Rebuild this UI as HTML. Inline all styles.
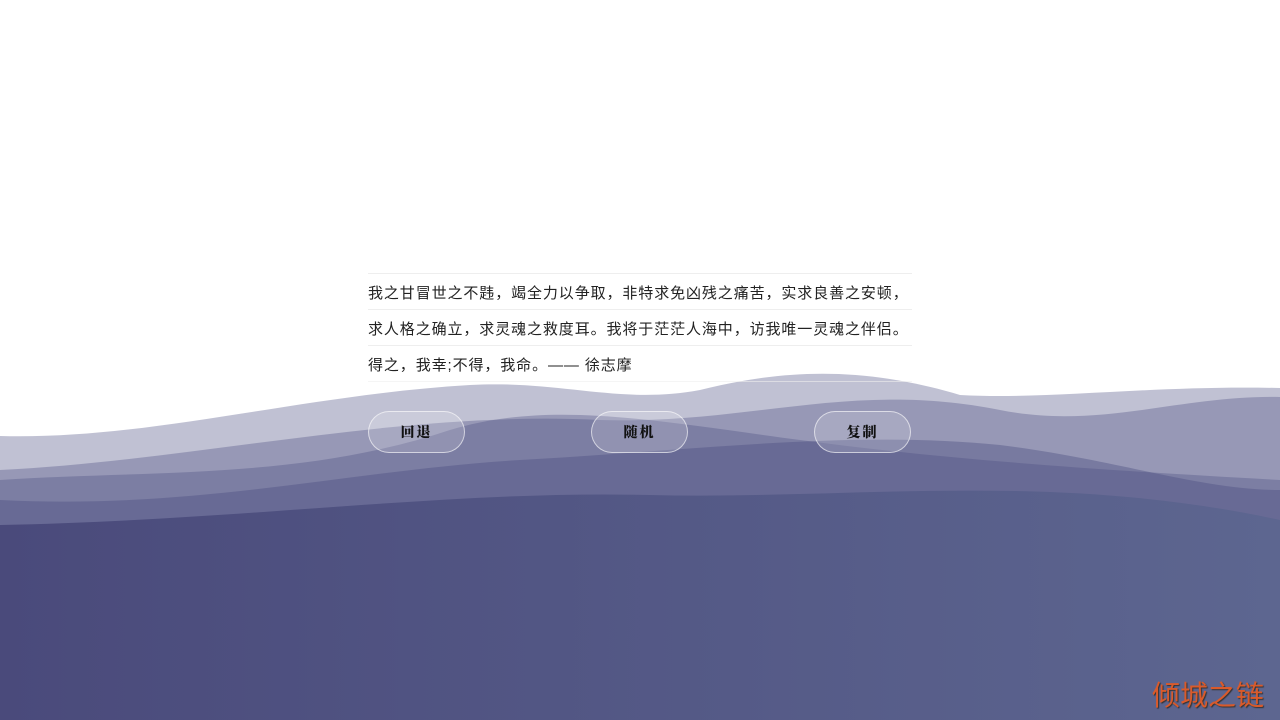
<!DOCTYPE html>
<html><head><meta charset="utf-8"><style>
html,body{margin:0;padding:0;width:1280px;height:720px;overflow:hidden;background:#fff;font-family:"Liberation Sans","Noto Sans CJK SC",sans-serif;}
svg.bg{position:absolute;left:0;top:0}
.txt{position:absolute;left:368px;top:273px;width:544px;}
.ln{height:35px;border-top:1px solid #eee;font-size:15px;letter-spacing:0.9px;line-height:39px;color:#222;white-space:nowrap;}
.ln:last-child{border-bottom:1px solid rgba(238,238,238,.6)}
.btn{position:absolute;top:411px;width:95px;height:40px;border:1px solid rgba(255,255,255,.6);border-radius:21px;background:rgba(255,255,255,.16);color:#111;font-family:"Noto Serif CJK SC",serif;font-weight:900;font-size:14px;letter-spacing:2px;text-align:center;line-height:40px;}
.wm{position:absolute;left:1152px;top:678px;color:#d95a2b;font-size:28px;line-height:36px;text-shadow:1px 1px 1px #333;}
</style></head><body>
<svg class="bg" width="1280" height="720" viewBox="0 0 1280 720">
<defs><linearGradient id="g" x1="0" x2="1"><stop offset="0" stop-color="#4a4a7b"/><stop offset="1" stop-color="#5d6690"/></linearGradient></defs>
<path d="M0 436 C150 440 300 395 470 385 C560 380 620 405 700 390 C780 370 860 365 960 395 C1050 400 1150 385 1280 388 L1280 560 L0 560Z" fill="#4a4e80" opacity=".35"/>
<path d="M0 470 C200 460 400 410 600 420 C750 425 850 380 1000 410 C1100 430 1180 395 1280 397 L1280 560 L0 560Z" fill="#4a4e80" opacity=".35"/>
<path d="M0 480 C150 470 300 480 450 430 C550 400 650 420 800 440 C950 460 1100 470 1280 480 L1280 560 L0 560Z" fill="#4a4e80" opacity=".35"/>
<path d="M0 500 C200 510 350 470 520 460 C700 450 850 430 1000 445 C1120 460 1200 490 1280 490 L1280 560 L0 560Z" fill="#4a4e80" opacity=".4"/>
<path d="M0 525 C250 520 450 490 650 495 C850 500 1050 470 1280 520 L1280 720 L0 720Z" fill="url(#g)"/>
<rect x="0" y="530" width="1280" height="190" fill="url(#g)"/>
</svg>
<div class="txt">
<div class="ln">我之甘冒世之不韪，竭全力以争取，非特求免凶残之痛苦，实求良善之安顿，</div>
<div class="ln">求人格之确立，求灵魂之救度耳。我将于茫茫人海中，访我唯一灵魂之伴侣。</div>
<div class="ln">得之，我幸;不得，我命。—— 徐志摩</div>
</div>
<div class="btn" style="left:368px">回退</div>
<div class="btn" style="left:591px">随机</div>
<div class="btn" style="left:814px">复制</div>
<div class="wm">倾城之链</div>
</body></html>
